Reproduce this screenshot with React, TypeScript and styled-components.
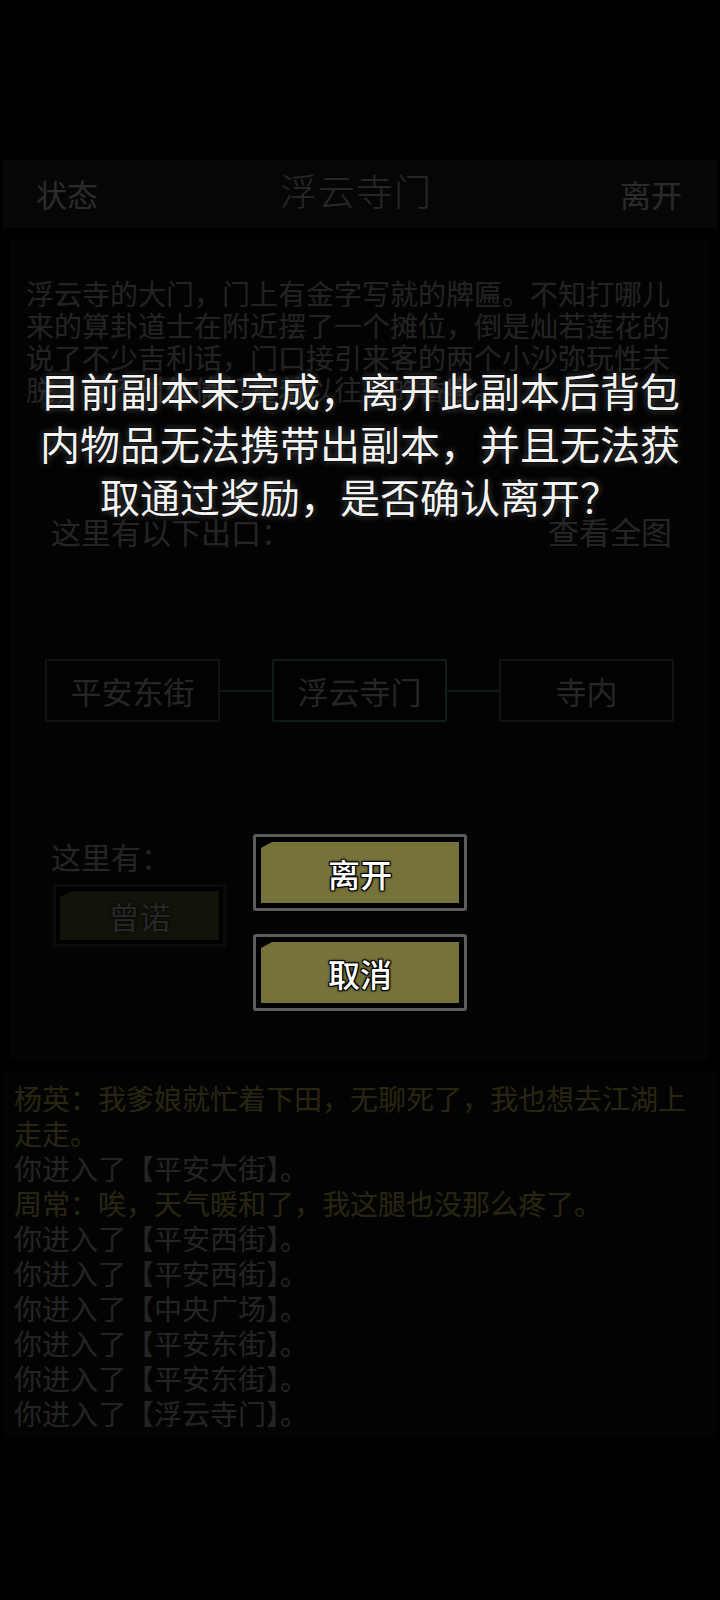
import * as React from 'react'
import styled, { createGlobalStyle } from 'styled-components'

const GlobalStyle = createGlobalStyle`
  html, body {
    margin: 0;
    padding: 0;
    background: #000;
  }
  body {
    font-family: "Noto Sans CJK SC", "Noto Sans", sans-serif;
  }
`

const Screen = styled.div`
  position: relative;
  width: 720px;
  height: 1600px;
  overflow: hidden;
  background: #000;
  color: #c4c4c4;
`

const Header = styled.div`
  margin: 160px 3px 0;
  height: 68px;
  box-sizing: border-box;
  padding: 0 34px 0 32px;
  display: grid;
  grid-template-columns: 1fr auto 1fr;
  align-items: center;
  background: #202020;
  border: 1px solid #2a2a2a;
`

const HeaderLink = styled.span<{ $end?: boolean }>`
  justify-self: ${(p) => (p.$end ? 'end' : 'start')};
  font-size: 31px;
  line-height: 40px;
  color: #d8d8d8;
`

const Title = styled.span`
  font-family: "Liberation Serif", "Noto Sans CJK SC", serif;
  font-size: 37px;
  font-weight: 300;
  line-height: 44px;
  letter-spacing: 1px;
  color: #c8c8c8;
  transform: translateX(-3px);
`

const MainPanel = styled.div`
  margin: 12px 12px 0 10px;
  height: 820px;
  box-sizing: border-box;
  padding-top: 36px;
  border: 1px solid #1c1c1c;
  background: #121212;
`

const Desc = styled.p`
  margin: 0;
  padding: 0 16px 0 15px;
  font-size: 28px;
  line-height: 32px;
  color: #b0b0b0;
`

const ExitsHead = styled.div`
  margin-top: 106px;
  padding: 0 35px 0 40px;
  height: 40px;
  display: flex;
  align-items: center;
  justify-content: space-between;
`

const SmallLabel = styled.span<{ $size?: number }>`
  font-size: ${(p) => p.$size ?? 30}px;
  line-height: 40px;
  color: #b8b8b8;
`

const ExitRow = styled.div`
  margin-top: 108px;
  padding-left: 34px;
  display: flex;
  align-items: center;
`

const ExitBox = styled.div<{ $current?: boolean }>`
  width: 175px;
  height: 63px;
  box-sizing: border-box;
  display: flex;
  align-items: center;
  justify-content: center;
  border: 2px solid ${(p) => (p.$current ? '#3f8f8f' : '#5a5a5a')};
  border-radius: 2px;
  background: #0a0a0a;
  font-size: 31px;
  color: #bcbcbc;
`

const Connector = styled.div`
  width: 52px;
  height: 2px;
  background: #3f7f7f;
`

const HereLabel = styled.div`
  margin-top: 114px;
  padding-left: 40px;
  font-size: 30px;
  line-height: 40px;
  color: #b8b8b8;
`

const NpcButton = styled.div`
  margin: 8px 0 0 42px;
  width: 173px;
  height: 63px;
  box-sizing: border-box;
  padding: 4px;
  border: 3px solid #3a3a3a;
  border-radius: 2px;
  background: #000;
  display: flex;
`

const NpcFill = styled.div`
  flex: 1;
  display: flex;
  align-items: center;
  justify-content: center;
  background: #5c5a2c;
  clip-path: polygon(0 6px, 11px 0, 100% 0, 100% 100%, 0 100%);
  font-size: 31px;
  color: #c8c8c8;
  text-shadow: 0 0 2px #000, 0 0 2px #000;
`

const Log = styled.div`
  margin: 11px 3px 0;
  padding: 10px 14px 7px 11px;
  background: #101010;
  font-size: 28px;
  line-height: 35px;
`

const LogLine = styled.div<{ $talk?: boolean }>`
  color: ${(p) => (p.$talk ? '#c8bb52' : '#b4b4b4')};
`

const Overlay = styled.div`
  position: absolute;
  inset: 0;
  background: rgba(0, 0, 0, 0.8);
  display: flex;
  flex-direction: column;
  align-items: center;
`

const DialogText = styled.div`
  margin-top: 364px;
  width: 660px;
  font-size: 40px;
  line-height: 53px;
  text-align: center;
  color: #f4f4f4;
  text-shadow: 0 0 1px #000, 0 0 2px #000, 0 0 3px #000, 0 0 6px rgba(120, 120, 120, 0.9);
`

const ButtonStack = styled.div`
  margin-top: 311px;
  display: flex;
  flex-direction: column;
  gap: 23px;
`

const DialogButton = styled.div`
  width: 214px;
  height: 77px;
  box-sizing: border-box;
  padding: 5px;
  border: 3px solid #5b5b5b;
  border-radius: 3px;
  background: #000;
  display: flex;
`

const ButtonFill = styled.div`
  flex: 1;
  display: flex;
  align-items: center;
  justify-content: center;
  background: #76733a;
  clip-path: polygon(0 6px, 11px 0, 100% 0, 100% 100%, 0 100%);
  font-size: 32px;
  font-weight: 500;
  color: #fff;
  text-shadow: -1px -1px 0 #000, 1px -1px 0 #000, -1px 1px 0 #000, 1px 1px 0 #000,
    0 0 3px #000, 0 0 3px #000;
`

const exits = [
  { name: '平安东街' },
  { name: '浮云寺门', current: true },
  { name: '寺内' },
]

const logs = [
  { text: '杨英：我爹娘就忙着下田，无聊死了，我也想去江湖上走走。', talk: true },
  { text: '你进入了【平安大街】。' },
  { text: '周常：唉，天气暖和了，我这腿也没那么疼了。', talk: true },
  { text: '你进入了【平安西街】。' },
  { text: '你进入了【平安西街】。' },
  { text: '你进入了【中央广场】。' },
  { text: '你进入了【平安东街】。' },
  { text: '你进入了【平安东街】。' },
  { text: '你进入了【浮云寺门】。' },
]

export default function App() {
  return (
    <>
      <GlobalStyle />
      <Screen>
        <Header>
          <HeaderLink>状态</HeaderLink>
          <Title>浮云寺门</Title>
          <HeaderLink $end>离开</HeaderLink>
        </Header>

        <MainPanel>
          <Desc>
            浮云寺的大门，门上有金字写就的牌匾。不知打哪儿来的算卦道士在附近摆了一个摊位，倒是灿若莲花的说了不少吉利话，门口接引来客的两个小沙弥玩性未脱，时不时偷偷打量着以往来的香客。
          </Desc>

          <ExitsHead>
            <SmallLabel>这里有以下出口：</SmallLabel>
            <SmallLabel $size={31}>查看全图</SmallLabel>
          </ExitsHead>

          <ExitRow>
            {exits.map((e, i) => (
              <React.Fragment key={e.name}>
                {i > 0 && <Connector />}
                <ExitBox $current={e.current}>{e.name}</ExitBox>
              </React.Fragment>
            ))}
          </ExitRow>

          <HereLabel>这里有：</HereLabel>
          <NpcButton>
            <NpcFill>曾诺</NpcFill>
          </NpcButton>
        </MainPanel>

        <Log>
          {logs.map((l, i) => (
            <LogLine key={i} $talk={l.talk}>
              {l.text}
            </LogLine>
          ))}
        </Log>

        <Overlay>
          <DialogText>
            目前副本未完成，离开此副本后背包内物品无法携带出副本，并且无法获取通过奖励，是否确认离开？
          </DialogText>
          <ButtonStack>
            <DialogButton>
              <ButtonFill>离开</ButtonFill>
            </DialogButton>
            <DialogButton>
              <ButtonFill>取消</ButtonFill>
            </DialogButton>
          </ButtonStack>
        </Overlay>
      </Screen>
    </>
  )
}
